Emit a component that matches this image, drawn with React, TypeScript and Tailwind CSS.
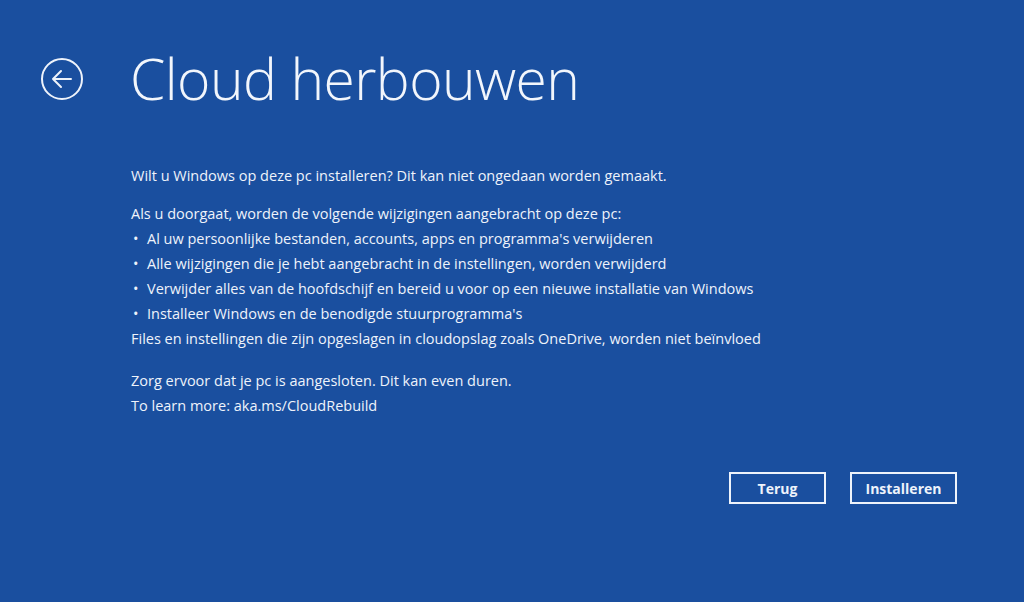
import React from "react";

const font = { fontFamily: '"Open Sans", "Noto Sans", sans-serif' };

function BackButton() {
  return (
    <svg width="44" height="44" viewBox="0 0 44 44" fill="none" className="text-[#eef3fb]">
      <circle cx="22" cy="22" r="20" stroke="currentColor" strokeWidth="2" />
      <path d="M31 22H13M21 14l-8 8 8 8" stroke="currentColor" strokeWidth="2" strokeLinecap="round" strokeLinejoin="round" />
    </svg>
  );
}

const bullets = [
  "Al uw persoonlijke bestanden, accounts, apps en programma's verwijderen",
  "Alle wijzigingen die je hebt aangebracht in de instellingen, worden verwijderd",
  "Verwijder alles van de hoofdschijf en bereid u voor op een nieuwe installatie van Windows",
  "Installeer Windows en de benodigde stuurprogramma's",
];

export default function App() {
  return (
    <div className="w-[1024px] h-[602px] bg-[#1a4f9f] text-[#eef3fb] flex flex-col overflow-hidden" style={font}>
      <div className="flex items-center pt-[50px] pl-[40px]">
        <BackButton />
        <h1 className="ml-[46px] text-[57px] font-light leading-none tracking-[-0.6px] text-[#f2f6fc]">Cloud herbouwen</h1>
      </div>
      <div className="pl-[131px] pt-[56px] text-[14.5px] leading-[25px]">
        <p>Wilt u Windows op deze pc installeren? Dit kan niet ongedaan worden gemaakt.</p>
        <p className="mt-[13px]">Als u doorgaat, worden de volgende wijzigingen aangebracht op deze pc:</p>
        <ul>
          {bullets.map((b) => (
            <li key={b} className="flex">
              <span className="w-[16px] pl-[2px]">•</span>
              <span>{b}</span>
            </li>
          ))}
        </ul>
        <p>Files en instellingen die zijn opgeslagen in cloudopslag zoals OneDrive, worden niet beïnvloed</p>
        <p className="mt-[17px]">Zorg ervoor dat je pc is aangesloten. Dit kan even duren.</p>
        <p>To learn more: aka.ms/CloudRebuild</p>
      </div>
      <div className="flex justify-end gap-[24px] pr-[67px] mt-[54px]">
        <button className="w-[97px] h-[32px] border-2 border-[#eef3fb] text-[14px] font-bold">Terug</button>
        <button className="w-[107px] h-[32px] border-2 border-[#eef3fb] text-[14px] font-bold">Installeren</button>
      </div>
    </div>
  );
}
